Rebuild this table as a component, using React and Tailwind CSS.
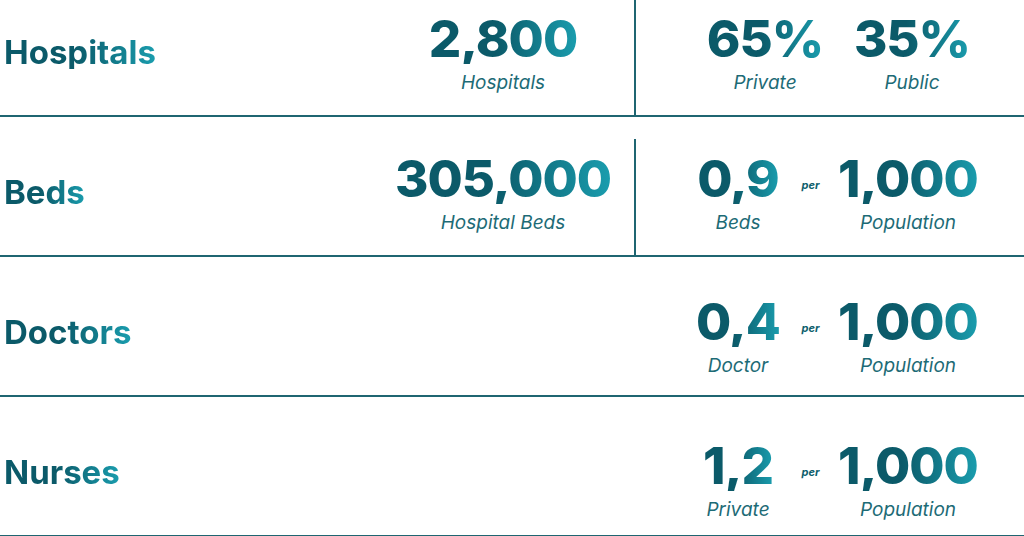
import React from 'react';

const grad =
  'bg-gradient-to-r from-[#0b5a69] from-45% to-[#1a9dae] bg-clip-text text-transparent';

function Stat({ value, caption, width = 'w-[120px]' }) {
  return (
    <div className={`flex flex-col items-center ${width}`}>
      <span className={`${grad} text-[51px] font-extrabold leading-none tracking-[-1px]`}>{value}</span>
      <span className="mt-[9px] text-[19px] leading-none italic font-normal text-[#1d6b76]">{caption}</span>
    </div>
  );
}

function Per({ top }) {
  return (
    <div className="w-[45px] flex justify-center" style={{ paddingTop: top }}>
      <span className="text-[11px] leading-none font-bold italic text-[#0f5f6d]">per</span>
    </div>
  );
}

function Row({ label, first, numTop, middle, children }) {
  return (
    <div className={`flex border-b-2 border-[#1f6571] ${first ? 'h-[117px]' : 'h-[140px] pt-[22px]'}`}>
      <div className="w-[372px] flex items-center pl-[4px] pb-[10px]">
        <span className={`${grad} text-[33px] font-bold leading-none`}>{label}</span>
      </div>
      <div className="w-[262px] flex justify-center" style={{ paddingTop: numTop }}>
        {middle}
      </div>
      <div className={`w-[2px] ${middle ? 'bg-[#1f6571]' : ''}`} />
      <div className="flex-1 flex" style={{ paddingTop: numTop }}>
        {children}
      </div>
    </div>
  );
}

export default function App() {
  return (
    <div className="w-[1024px] h-[536px] bg-white overflow-hidden font-['Inter',sans-serif]">
      <Row label="Hospitals" first numTop={13} middle={<Stat value="2,800" caption="Hospitals" width="w-[200px]" />}>
        <div className="flex pl-[69px] gap-[27px]">
          <Stat value="65%" caption="Private" />
          <Stat value="35%" caption="Public" />
        </div>
      </Row>
      <Row label="Beds" numTop={14} middle={<Stat value="305,000" caption="Hospital Beds" width="w-[240px]" />}>
        <div className="flex pl-[52px]">
          <Stat value="0,9" caption="Beds" width="w-[100px]" />
          <Per top={27} />
          <Stat value="1,000" caption="Population" width="w-[150px]" />
        </div>
      </Row>
      <Row label="Doctors" numTop={17}>
        <div className="flex pl-[52px]">
          <Stat value="0,4" caption="Doctor" width="w-[100px]" />
          <Per top={27} />
          <Stat value="1,000" caption="Population" width="w-[150px]" />
        </div>
      </Row>
      <Row label="Nurses" numTop={21}>
        <div className="flex pl-[52px]">
          <Stat value="1,2" caption="Private" width="w-[100px]" />
          <Per top={27} />
          <Stat value="1,000" caption="Population" width="w-[150px]" />
        </div>
      </Row>
    </div>
  );
}
